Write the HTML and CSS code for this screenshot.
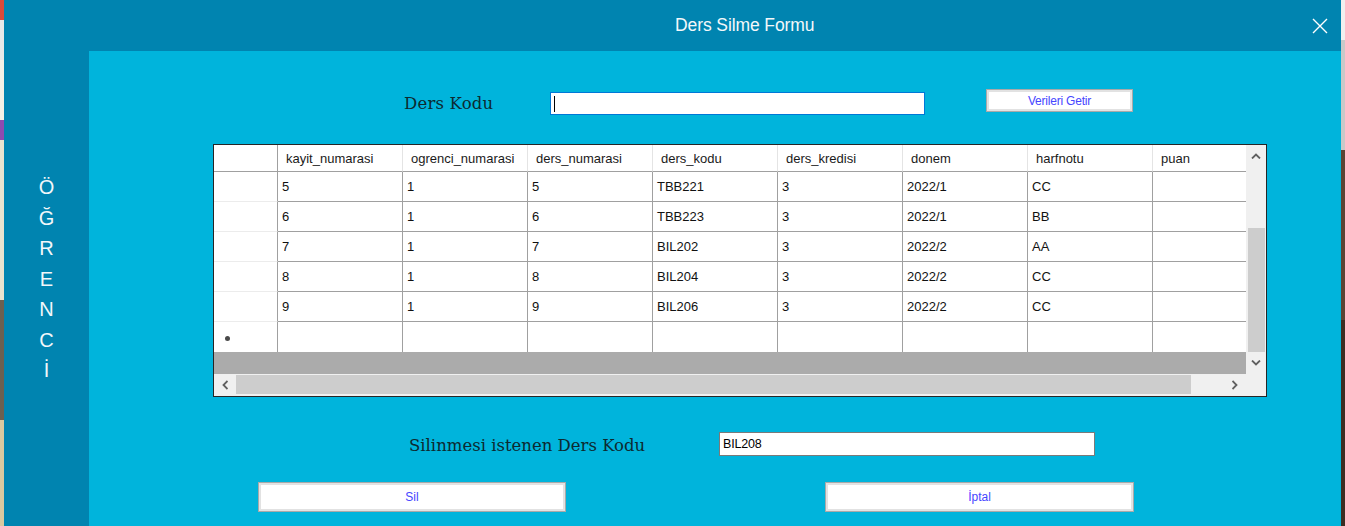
FILE: index.html
```html
<!DOCTYPE html>
<html lang="tr">
<head>
<meta charset="utf-8">
<title>Ders Silme Formu</title>
<link rel="stylesheet" href="styles.css">
</head>
<body>
<div class="desktop">
  <div class="strip strip-left"></div>
  <div class="window">
    <div class="titlebar">
      <span class="title">Ders Silme Formu</span>
      <svg class="close" width="16" height="16" viewBox="0 0 16 16"><path d="M1 1 L15 15 M15 1 L1 15" stroke="#ffffff" stroke-width="1.4" fill="none"/></svg>
    </div>
    <div class="main">
      <div class="sidebar">
        <span>Ö</span><span>Ğ</span><span>R</span><span>E</span><span>N</span><span>C</span><span>İ</span>
      </div>
      <div class="content">
        <div class="row-top">
          <label class="lbl lbl-kod">Ders Kodu</label>
          <div class="input input-focus"><span class="caret"></span></div>
          <button class="btn btn-getir">Verileri Getir</button>
        </div>

        <div class="grid">
          <div class="grid-upper">
            <div class="table">
              <div class="tr head">
                <div class="rh"></div>
                <div class="td">kayit_numarasi</div>
                <div class="td">ogrenci_numarasi</div>
                <div class="td">ders_numarasi</div>
                <div class="td">ders_kodu</div>
                <div class="td">ders_kredisi</div>
                <div class="td">donem</div>
                <div class="td">harfnotu</div>
                <div class="td">puan</div>
              </div>
              <div class="tr">
                <div class="rh"></div>
                <div class="td">5</div><div class="td">1</div><div class="td">5</div><div class="td">TBB221</div><div class="td">3</div><div class="td">2022/1</div><div class="td">CC</div><div class="td"></div>
              </div>
              <div class="tr">
                <div class="rh"></div>
                <div class="td">6</div><div class="td">1</div><div class="td">6</div><div class="td">TBB223</div><div class="td">3</div><div class="td">2022/1</div><div class="td">BB</div><div class="td"></div>
              </div>
              <div class="tr">
                <div class="rh"></div>
                <div class="td">7</div><div class="td">1</div><div class="td">7</div><div class="td">BIL202</div><div class="td">3</div><div class="td">2022/2</div><div class="td">AA</div><div class="td"></div>
              </div>
              <div class="tr">
                <div class="rh"></div>
                <div class="td">8</div><div class="td">1</div><div class="td">8</div><div class="td">BIL204</div><div class="td">3</div><div class="td">2022/2</div><div class="td">CC</div><div class="td"></div>
              </div>
              <div class="tr">
                <div class="rh"></div>
                <div class="td">9</div><div class="td">1</div><div class="td">9</div><div class="td">BIL206</div><div class="td">3</div><div class="td">2022/2</div><div class="td">CC</div><div class="td"></div>
              </div>
              <div class="tr newrow">
                <div class="rh"><span class="star"></span></div>
                <div class="td"></div><div class="td"></div><div class="td"></div><div class="td"></div><div class="td"></div><div class="td"></div><div class="td"></div><div class="td"></div>
              </div>
              <div class="fill"></div>
            </div>
            <div class="vscroll">
              <div class="arrow-v">
                <svg width="10" height="6" viewBox="0 0 10 6"><path d="M1 5.5 L5 1.5 L9 5.5" stroke="#606060" stroke-width="1.8" fill="none"/></svg>
              </div>
              <div class="vtrack"><div class="vthumb"></div></div>
              <div class="arrow-v">
                <svg width="10" height="6" viewBox="0 0 10 6"><path d="M1 0.5 L5 4.5 L9 0.5" stroke="#606060" stroke-width="1.8" fill="none"/></svg>
              </div>
            </div>
          </div>
          <div class="hscroll">
            <div class="arrow-h">
              <svg width="6" height="10" viewBox="0 0 6 10"><path d="M5.5 1 L1.5 5 L5.5 9" stroke="#606060" stroke-width="1.8" fill="none"/></svg>
            </div>
            <div class="hthumb"></div>
            <div class="htrack"></div>
            <div class="arrow-h">
              <svg width="6" height="10" viewBox="0 0 6 10"><path d="M0.5 1 L4.5 5 L0.5 9" stroke="#606060" stroke-width="1.8" fill="none"/></svg>
            </div>
            <div class="corner"></div>
          </div>
        </div>

        <div class="row-del">
          <label class="lbl lbl-sil">Silinmesi istenen Ders Kodu</label>
          <div class="input input-del">BIL208</div>
        </div>

        <div class="row-btns">
          <button class="btn btn-sil">Sil</button>
          <button class="btn btn-iptal">İptal</button>
        </div>
      </div>
    </div>
  </div>
  <div class="strip strip-right"></div>
</div>
</body>
</html>
```

FILE: styles.css
```css
* { box-sizing: border-box; }

html, body {
  margin: 0;
  padding: 0;
  width: 1345px;
  height: 526px;
  overflow: hidden;
}

body {
  font-family: "Liberation Sans", Arial, sans-serif;
  background: #2e2a26;
}

.desktop {
  display: flex;
  width: 1345px;
  height: 526px;
}

.strip { width: 4px; height: 526px; }
.strip-left {
  background: linear-gradient(#d94a3a 0 20px, #e8e8e8 20px 60px, #f4f1e6 60px 120px, #8d4bb0 120px 140px, #e9e3cf 140px 300px, #6b6050 300px 420px, #d9c9a0 420px 526px);
}
.strip-right {
  background: linear-gradient(#f0f0f0 0 40px, #c9c9c9 40px 150px, #5a4434 150px 320px, #3c2c22 320px 526px);
}

.window {
  width: 1337px;
  height: 526px;
  display: flex;
  flex-direction: column;
  background: #0084b0;
}

.titlebar {
  height: 51px;
  flex: 0 0 51px;
  display: flex;
  align-items: center;
  background: #0084b0;
}

.title {
  margin-left: 671px;
  color: #f4f8fa;
  font-size: 17.5px;
  letter-spacing: -0.1px;
}

.close {
  margin-left: auto;
  margin-right: 13px;
}

.main {
  flex: 1;
  display: flex;
}

.sidebar {
  width: 85px;
  flex: 0 0 85px;
  background: #0084b0;
  display: flex;
  flex-direction: column;
  align-items: center;
  padding-top: 121px;
  color: #f2f7fa;
  font-size: 20px;
  line-height: 30.5px;
}

.content {
  flex: 1;
  background: #00b4dc;
  display: flex;
  flex-direction: column;
}

/* top row */
.row-top {
  display: flex;
  align-items: flex-start;
  padding-top: 38px;
  padding-left: 315px;
  height: 93px;
  flex: 0 0 93px;
}

.lbl {
  font-family: "DejaVu Serif", "Liberation Serif", serif;
  font-size: 16.5px;
  color: #0d2a30;
}

.lbl-kod {
  width: 146px;
  margin-top: 3px;
  line-height: 23px;
  letter-spacing: 0.2px;
}

.input {
  background: #ffffff;
  border: 1px solid #7a7a7a;
  font-size: 12.5px;
  color: #000;
  display: flex;
  align-items: center;
  padding-left: 3px;
}

.input-focus {
  width: 375px;
  height: 23px;
  margin-top: 3px;
  border-color: #0078d7;
}

.caret {
  display: block;
  width: 1px;
  height: 16px;
  background: #000;
}

.btn {
  font-family: "Liberation Sans", Arial, sans-serif;
  font-size: 12px;
  color: #4646ff;
  background: #ffffff;
  border: 1px solid #a9a9a9;
  box-shadow: inset 0 0 0 2px #e2e2e2;
  padding: 0;
  margin: 0;
}

.btn-getir {
  width: 147px;
  height: 23px;
  margin-left: 61px;
  letter-spacing: -0.2px;
}

/* grid */
.grid {
  margin-left: 124px;
  width: 1054px;
  height: 253px;
  flex: 0 0 253px;
  border: 1px solid #262626;
  display: flex;
  flex-direction: column;
  background: #ababab;
}

.grid-upper {
  display: flex;
  height: 229px;
}

.table {
  width: 1032px;
  height: 229px;
  overflow: hidden;
  display: flex;
  flex-direction: column;
  background: #ababab;
}

.tr {
  display: flex;
  height: 30px;
  flex: 0 0 30px;
  background: #ffffff;
}

.tr.head { height: 27px; flex: 0 0 27px; }

.rh {
  width: 64px;
  flex: 0 0 64px;
  border-right: 1px solid #a0a0a0;
  border-bottom: 1px solid #ececec;
  display: flex;
  align-items: center;
  padding-left: 11px;
}

.td {
  width: 125px;
  flex: 0 0 125px;
  border-right: 1px solid #a0a0a0;
  border-bottom: 1px solid #a0a0a0;
  font-size: 13px;
  color: #111;
  padding-left: 4px;
  display: flex;
  align-items: center;
  white-space: nowrap;
}

.head .td {
  border-right: 1px solid #e4e4e4;
  border-bottom: 1px solid #a0a0a0;
  color: #1a1a1a;
  padding-left: 8px;
}
.head .rh { border-bottom: 1px solid #a0a0a0; }

.newrow .td, .newrow .rh { border-bottom: none; }

.star {
  display: block;
  width: 5px;
  height: 5px;
  border-radius: 50%;
  background: #4a4a4a;
  margin-top: 3px;
}

.fill { flex: 1; background: #ababab; }

.vscroll {
  width: 20px;
  height: 229px;
  background: #f0f0f0;
  display: flex;
  flex-direction: column;
}

.arrow-v {
  height: 22px;
  flex: 0 0 22px;
  display: flex;
  align-items: center;
  justify-content: center;
}

.vtrack {
  flex: 1;
  display: flex;
  flex-direction: column;
  padding-top: 61px;
  padding-left: 2px;
  padding-right: 1px;
}

.vthumb {
  height: 124px;
  background: #cdcdcd;
}

.hscroll {
  height: 22px;
  display: flex;
  background: #f0f0f0;
  align-items: stretch;
}

.arrow-h {
  width: 22px;
  flex: 0 0 22px;
  display: flex;
  align-items: center;
  justify-content: center;
}

.hthumb {
  width: 955px;
  flex: 0 0 955px;
  margin: 1px 0 2px;
  background: #cdcdcd;
}

.htrack { flex: 1; }

.corner { width: 20px; flex: 0 0 20px; }

/* delete row */
.row-del {
  display: flex;
  align-items: flex-start;
  margin-top: 35px;
  padding-left: 320px;
  height: 24px;
}

.lbl-sil {
  width: 310px;
  line-height: 24px;
  margin-top: 2px;
}

.input-del {
  width: 376px;
  height: 24px;
  padding-left: 3px;
  letter-spacing: -0.2px;
}

.row-btns {
  display: flex;
  margin-top: 26px;
  padding-left: 169px;
}

.btn-sil {
  width: 308px;
  height: 30px;
}

.btn-iptal {
  width: 309px;
  height: 30px;
  margin-left: 259px;
}
```
